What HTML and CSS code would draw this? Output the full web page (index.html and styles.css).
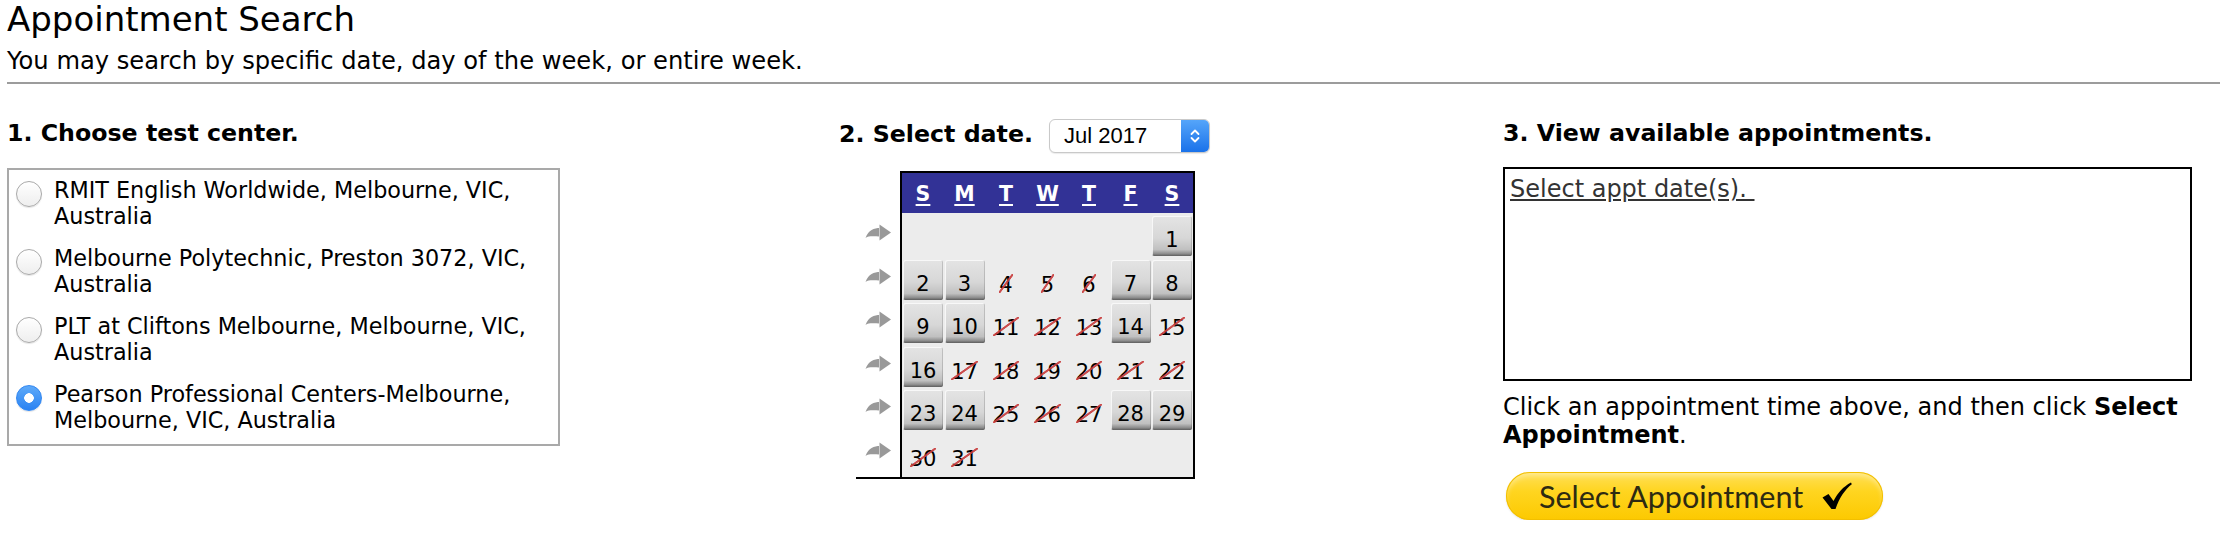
FILE: index.html
```html
<!DOCTYPE html>
<html lang="en">
<head>
<meta charset="utf-8">
<title>Appointment Search</title>
<link rel="stylesheet" href="styles.css">
</head>
<body>
<div class="page">
  <h1 class="title">Appointment Search</h1>
  <p class="subtitle">You may search by specific date, day of the week, or entire week.</p>
  <div class="rule"></div>

  <div class="cols">
    <section class="col">
      <h2 class="step">1. Choose test center.</h2>
      <div class="centers">
        <label class="opt"><span class="radio"></span><span class="opt-text">RMIT English Worldwide, Melbourne, VIC, Australia</span></label>
        <label class="opt"><span class="radio"></span><span class="opt-text">Melbourne Polytechnic, Preston 3072, VIC, Australia</span></label>
        <label class="opt"><span class="radio"></span><span class="opt-text">PLT at Cliftons Melbourne, Melbourne, VIC, Australia</span></label>
        <label class="opt"><span class="radio is-on"></span><span class="opt-text">Pearson Professional Centers-Melbourne, Melbourne, VIC, Australia</span></label>
      </div>
    </section>

    <section class="col">
      <div class="date-row">
        <h2 class="step">2. Select date.</h2>
        <div class="month-select">
          <span class="month-value">Jul 2017</span>
          <span class="stepper">
            <svg width="12" height="20" viewBox="0 0 12 20"><path d="M2.5 8 L6 4.5 L9.5 8 M2.5 12 L6 15.5 L9.5 12" fill="none" stroke="#fff" stroke-width="1.8" stroke-linecap="round" stroke-linejoin="round"/></svg>
          </span>
        </div>
      </div>

      <div class="cal-wrap">
        <div class="week-arrows">
          <span class="arrow-row"><svg class="arrow" width="26" height="18" viewBox="0 0 26 18"><path d="M14.5 0.5 L26 8.5 L14.5 16.5 Z M15 4 C9 4 3.5 6 0.5 14 C4 11.5 9 12.5 15 12.5 Z" fill="#999"/></svg></span>
          <span class="arrow-row"><svg class="arrow" width="26" height="18" viewBox="0 0 26 18"><path d="M14.5 0.5 L26 8.5 L14.5 16.5 Z M15 4 C9 4 3.5 6 0.5 14 C4 11.5 9 12.5 15 12.5 Z" fill="#999"/></svg></span>
          <span class="arrow-row"><svg class="arrow" width="26" height="18" viewBox="0 0 26 18"><path d="M14.5 0.5 L26 8.5 L14.5 16.5 Z M15 4 C9 4 3.5 6 0.5 14 C4 11.5 9 12.5 15 12.5 Z" fill="#999"/></svg></span>
          <span class="arrow-row"><svg class="arrow" width="26" height="18" viewBox="0 0 26 18"><path d="M14.5 0.5 L26 8.5 L14.5 16.5 Z M15 4 C9 4 3.5 6 0.5 14 C4 11.5 9 12.5 15 12.5 Z" fill="#999"/></svg></span>
          <span class="arrow-row"><svg class="arrow" width="26" height="18" viewBox="0 0 26 18"><path d="M14.5 0.5 L26 8.5 L14.5 16.5 Z M15 4 C9 4 3.5 6 0.5 14 C4 11.5 9 12.5 15 12.5 Z" fill="#999"/></svg></span>
          <span class="arrow-row"><svg class="arrow" width="26" height="18" viewBox="0 0 26 18"><path d="M14.5 0.5 L26 8.5 L14.5 16.5 Z M15 4 C9 4 3.5 6 0.5 14 C4 11.5 9 12.5 15 12.5 Z" fill="#999"/></svg></span>
        </div>
        <div class="cal">
          <div class="cal-head">
            <a href="#">S</a><a href="#">M</a><a href="#">T</a><a href="#">W</a><a href="#">T</a><a href="#">F</a><a href="#">S</a>
          </div>
          <div class="cal-body">
            <span class="day"></span><span class="day"></span><span class="day"></span><span class="day"></span><span class="day"></span><span class="day"></span><span class="day open">1</span>
            <span class="day open">2</span><span class="day open">3</span><span class="day"><i class="struck">4</i></span><span class="day"><i class="struck">5</i></span><span class="day"><i class="struck">6</i></span><span class="day open">7</span><span class="day open">8</span>
            <span class="day open">9</span><span class="day open">10</span><span class="day"><i class="struck">11</i></span><span class="day"><i class="struck">12</i></span><span class="day"><i class="struck">13</i></span><span class="day open">14</span><span class="day"><i class="struck">15</i></span>
            <span class="day open">16</span><span class="day"><i class="struck">17</i></span><span class="day"><i class="struck">18</i></span><span class="day"><i class="struck">19</i></span><span class="day"><i class="struck">20</i></span><span class="day"><i class="struck">21</i></span><span class="day"><i class="struck">22</i></span>
            <span class="day open">23</span><span class="day open">24</span><span class="day"><i class="struck">25</i></span><span class="day"><i class="struck">26</i></span><span class="day"><i class="struck">27</i></span><span class="day open">28</span><span class="day open">29</span>
            <span class="day"><i class="struck">30</i></span><span class="day"><i class="struck">31</i></span><span class="day"></span><span class="day"></span><span class="day"></span><span class="day"></span><span class="day"></span>
          </div>
        </div>
      </div>
    </section>

    <section class="col">
      <h2 class="step">3. View available appointments.</h2>
      <div class="appt-box"><a class="appt-link" href="#">Select appt date(s).&nbsp;</a></div>
      <p class="hint">Click an appointment time above, and then click <b>Select</b> <b>Appointment</b>.</p>
      <button class="select-btn" type="button">
        <span class="select-btn-label">Select Appointment</span>
        <svg width="32" height="28" viewBox="0 0 32 28"><path d="M1.5 15.5 L7.5 12 L12.5 19 C17 10.5 22.5 4.5 30 0.5 L30.8 2.2 C24 7.5 18.5 15.5 14.5 27 L10.5 27 Z" fill="#000"/></svg>
      </button>
    </section>
  </div>
</div>
</body>
</html>
```

FILE: styles.css
```css
html, body {
  margin: 0;
  padding: 0;
  background: #fff;
}

body {
  font-family: "DejaVu Sans", Verdana, sans-serif;
  color: #000;
}

.page {
  padding-left: 7px;
}

.title {
  margin: 0;
  font-size: 34px;
  line-height: 39px;
  font-weight: normal;
}

.subtitle {
  margin: 8px 0 0;
  font-size: 24.2px;
  line-height: 28px;
}

.rule {
  margin: 7px 14px 0 0;
  border-top: 2px solid #9c9c9c;
}

.cols {
  display: grid;
  grid-template-columns: 832px 664px 1fr;
  margin-top: 36px;
  align-items: start;
}

.step {
  margin: 0;
  font-size: 23.7px;
  line-height: 27px;
  font-weight: bold;
}

/* column 1 */
.centers {
  margin-top: 21px;
  width: 553px;
  box-sizing: border-box;
  border: 2px solid #a9a9a9;
  padding: 7px 8px 11px 7px;
  display: flex;
  flex-direction: column;
  gap: 16px;
}

.opt {
  display: flex;
  align-items: flex-start;
  gap: 12px;
  font-size: 22.3px;
  line-height: 26px;
}

.radio {
  flex: none;
  width: 26px;
  height: 26px;
  margin-top: 4px;
  box-sizing: border-box;
  border-radius: 50%;
  border: 1px solid #a9a9a9;
  background: linear-gradient(#ffffff, #eeeeee);
  box-shadow: 0 1px 1px rgba(0, 0, 0, 0.1);
}

.radio.is-on {
  border-color: #2f86f2;
  background: radial-gradient(circle, #ffffff 0, #ffffff 4.5px, transparent 5px), linear-gradient(#5eaaf9, #2a82f2);
}

/* column 2 */
.date-row {
  display: flex;
  align-items: flex-start;
  margin-top: -1px;
}

.date-row .step {
  margin-top: 2px;
}

.month-select {
  margin-left: 16px;
  width: 161px;
  height: 34px;
  box-sizing: border-box;
  display: flex;
  align-items: center;
  border: 1px solid #c9c9c9;
  border-radius: 6px;
  background: #fff;
  box-shadow: 0 1px 1px rgba(0, 0, 0, 0.08);
  overflow: hidden;
}

.month-value {
  flex: 1;
  padding-left: 14px;
  font-family: "Liberation Sans", Arial, sans-serif;
  font-size: 22px;
  line-height: 32px;
}

.stepper {
  align-self: stretch;
  width: 28px;
  display: flex;
  align-items: center;
  justify-content: center;
  background: linear-gradient(#55a5fa, #1a72ea);
}

.cal-wrap {
  display: flex;
  margin: 18px 0 0 17px;
}

.week-arrows {
  width: 44px;
  border-bottom: 2px solid #000;
  padding-top: 45px;
  display: flex;
  flex-direction: column;
  gap: 3.5px;
}

.arrow-row {
  height: 40px;
  display: flex;
  align-items: center;
  justify-content: center;
}

.arrow {
  margin-top: -6px;
}

.cal {
  width: 295px;
  box-sizing: border-box;
  border: 2px solid #000;
  background: #ececec;
}

.cal-head {
  display: grid;
  grid-template-columns: repeat(7, 40px);
  column-gap: 1.5px;
  padding: 0 1px;
  height: 40px;
  align-items: center;
  background: #323296;
}

.cal-head a {
  color: #fff;
  font-weight: bold;
  font-size: 20.5px;
  line-height: 24px;
  text-align: center;
  text-decoration: underline;
  text-decoration-thickness: 2px;
  text-underline-offset: 3px;
  padding-top: 2px;
}

.cal-body {
  display: grid;
  grid-template-columns: repeat(7, 40px);
  grid-auto-rows: 40px;
  column-gap: 1.5px;
  row-gap: 3.5px;
  padding: 3px 1px 3.5px;
}

.day {
  display: flex;
  align-items: flex-end;
  justify-content: center;
  padding-bottom: 4px;
  box-sizing: border-box;
  font-size: 21px;
  line-height: 23px;
}

.day.open {
  border-radius: 2px;
  background: linear-gradient(180deg, #e4e4e4 0%, #d7d7d7 55%, #c0c0c0 84%, #8e8e8e 94%, #5c5c5c 100%);
  box-shadow: inset 1px 1px 0 rgba(255, 255, 255, 0.75), inset -1px 0 0 rgba(0, 0, 0, 0.15);
}

.struck {
  position: relative;
  display: inline-block;
  font-style: normal;
  line-height: 20px;
  margin-bottom: 1px;
}

.struck::after {
  content: "";
  position: absolute;
  top: -1px;
  bottom: 2px;
  left: 0;
  right: 0;
  background: linear-gradient(to bottom right, transparent calc(50% - 1.4px), rgba(200, 60, 60, 0.9) calc(50% - 0.7px), rgba(200, 60, 60, 0.9) calc(50% + 0.7px), transparent calc(50% + 1.4px));
}

/* column 3 */
.appt-box {
  margin-top: 20px;
  width: 689px;
  height: 214px;
  box-sizing: border-box;
  border: 2px solid #000;
  padding: 6px 5px;
}

.appt-link {
  color: #333;
  font-size: 24px;
  line-height: 28px;
  text-decoration: underline;
}

.hint {
  margin: 12px 0 0;
  width: 700px;
  font-size: 24px;
  line-height: 28px;
}

.select-btn {
  margin: 23px 0 0 3px;
  width: 377px;
  height: 48px;
  box-sizing: border-box;
  padding: 0 0 0 33px;
  display: flex;
  align-items: center;
  gap: 18px;
  border: none;
  border-radius: 24px;
  background: linear-gradient(#ffe05a 0%, #ffd520 40%, #fcc900 100%);
  box-shadow: inset 0 0 0 1px #f2bf00, inset 0 4px 5px rgba(255, 255, 255, 0.35), 0 1px 2px rgba(0, 0, 0, 0.12);
  cursor: pointer;
}

.select-btn-label {
  font-family: Lato, "DejaVu Sans", sans-serif;
  font-size: 30.5px;
  line-height: 34px;
  color: #2d2a12;
}
```
